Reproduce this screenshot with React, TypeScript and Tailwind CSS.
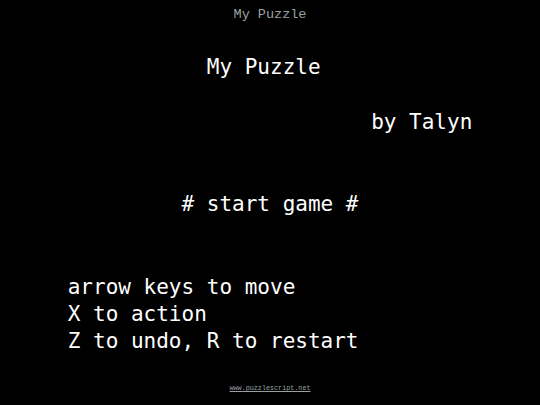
import React from 'react';

const rows: string[] = [
  '',
  '            My Puzzle',
  '',
  '                         by Talyn',
  '',
  '',
  '          # start game #',
  '',
  '',
  ' arrow keys to move',
  ' X to action',
  ' Z to undo, R to restart',
  '',
];

const App: React.FC = () => {
  return (
    <div className="w-[540px] h-[405px] bg-black flex flex-col overflow-hidden">
      {/* window title */}
      <header className="h-[27px] flex items-center justify-center">
        <span className="text-[13.5px] leading-none text-[#9ba1a1] font-['Liberation_Mono',monospace] pt-[3px]">
          My Puzzle
        </span>
      </header>

      {/* title screen grid, 34 columns x 13 rows */}
      <main className="flex justify-center">
        <div className="w-[34ch] text-[21px] leading-[27.4px] text-white font-['DejaVu_Sans_Mono',monospace]">
          {rows.map((line, i) => (
            <div key={i} className="h-[27.4px] whitespace-pre">
              {line}
            </div>
          ))}
        </div>
      </main>

      <footer className="flex-1 flex items-start justify-center">
        <a className="text-[6.75px] leading-[10px] text-[#9ba1a1] underline font-['Liberation_Mono',monospace]">
          www.puzzlescript.net
        </a>
      </footer>
    </div>
  );
};

export default App;
